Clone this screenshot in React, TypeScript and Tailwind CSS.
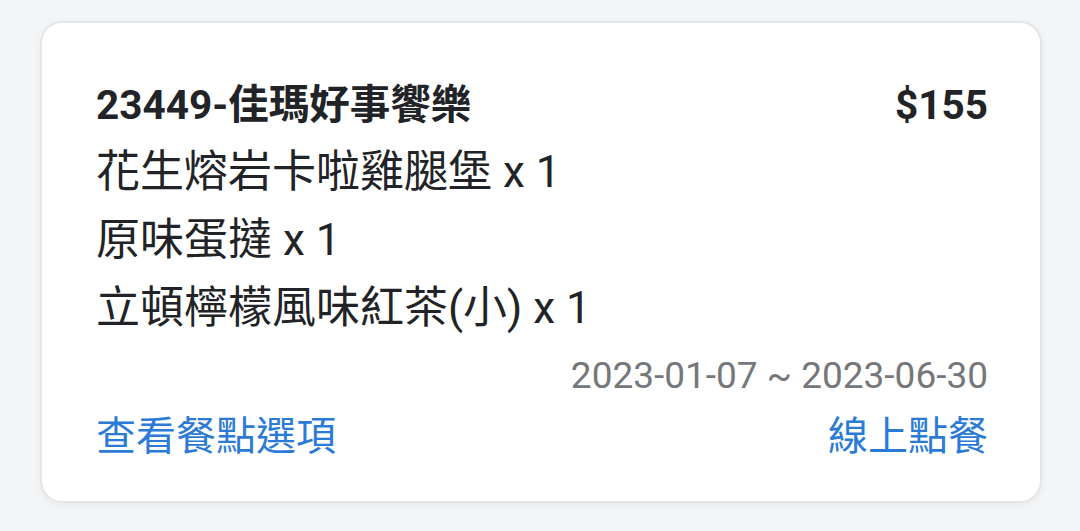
export default function App() {
  const items = ["花生熔岩卡啦雞腿堡 x 1", "原味蛋撻 x 1", "立頓檸檬風味紅茶(小) x 1"];

  return (
    <div
      className="w-[1080px] h-[531px] bg-[#f4f5f7] pt-[21px] pl-[40px]"
      style={{ fontFamily: 'Roboto, "Noto Sans CJK TC", sans-serif' }}
    >
      <div className="w-[1002px] h-[482px] bg-white rounded-[22px] border-2 border-[#e4e5e7] shadow-[0_2px_8px_rgba(0,0,0,0.05)] pt-[54px] pl-[54px] pr-[52px]">
        {/* header */}
        <div className="flex justify-between items-center h-[56px] text-[40.5px] font-bold text-[#222326]">
          <span>23449-佳瑪好事饗樂</span>
          <span>$155</span>
        </div>

        <div className="mt-[5px] flex flex-col text-[44px] text-[#222326]">
          {items.map((item) => (
            <div key={item} className="h-[68px] leading-[68px]">
              {item}
            </div>
          ))}
        </div>

        <div className="h-[68px] leading-[68px] text-right text-[37px] text-[#76777b]">
          2023-01-07 ~ 2023-06-30
        </div>

        <div className="flex justify-between items-center h-[54px] text-[40px] text-[#2b7bd6]">
          <span>查看餐點選項</span>
          <span>線上點餐</span>
        </div>
      </div>
    </div>
  );
}
